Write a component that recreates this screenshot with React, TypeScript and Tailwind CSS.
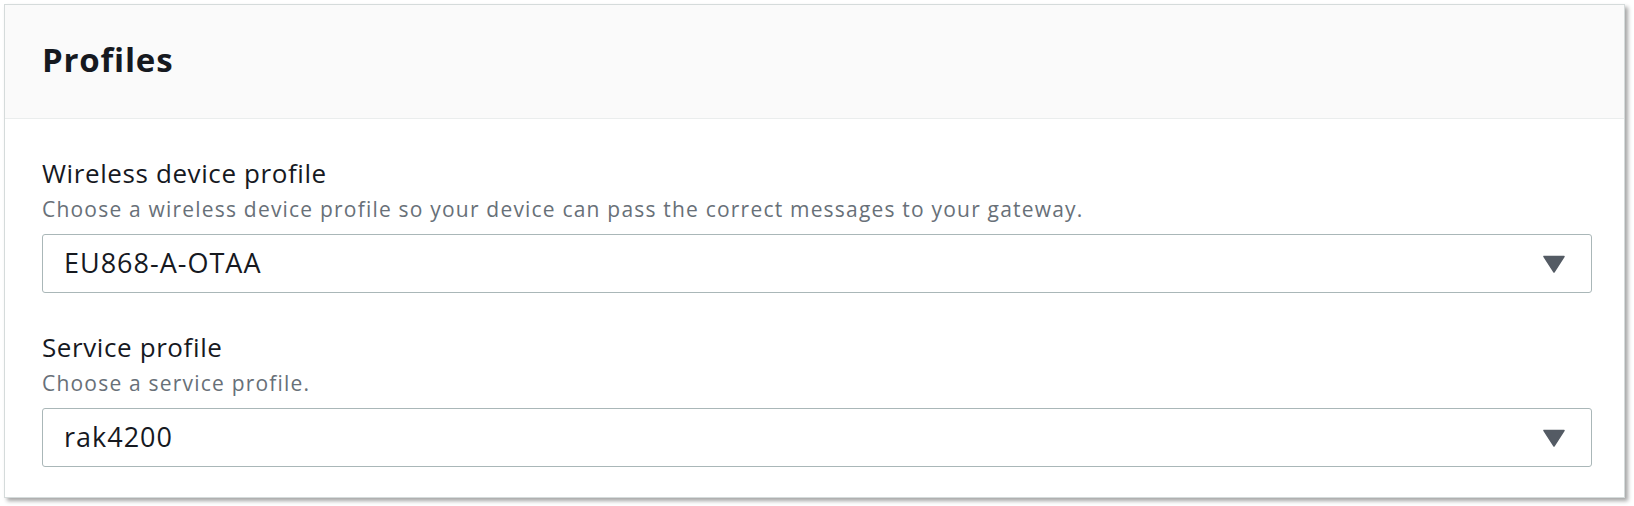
const Caret = () => (
  <svg width="22" height="18" viewBox="0 0 22 18" className="shrink-0">
    <path d="M1 1.5 H21 L11 17 Z" fill="#545b64" stroke="#545b64" strokeWidth="1.5" strokeLinejoin="round" />
  </svg>
);

type FieldProps = {
  label: string;
  description: string;
  value: string;
  first?: boolean;
};

const Field = ({ label, description, value, first }: FieldProps) => (
  <div className={first ? "" : "mt-[39px]"}>
    <div className="text-[26px] leading-[30px] tracking-[0.6px] text-[#16191f]">{label}</div>
    <div className="mt-[8px] text-[21px] leading-[26px] tracking-[1.2px] text-[#687078]">
      {description}
    </div>
    <div className="mt-[12px] flex items-center justify-between h-[59px] border border-[#aab7b8] rounded-[3px] pl-[21px] pr-[26px] bg-white">
      <span className="text-[27px] tracking-[1px] text-[#16191f]">{value}</span>
      <Caret />
    </div>
  </div>
);

const App = () => {
  return (
    <div
      className="w-[1634px] h-[506px] bg-white pt-[4px] pl-[4px]"
      style={{ fontFamily: '"Open Sans", "Noto Sans", sans-serif' }}
    >
      <div className="w-[1621px] h-[494px] border border-[#d5dbdb] bg-white shadow-[3px_3px_4px_rgba(0,0,0,0.35)]">
        <div className="h-[114px] bg-[#fafafa] border-b border-[#eaeded] flex items-center pl-[37px] pb-[4px]">
          <h2 className="text-[33px] font-bold text-[#16191f] tracking-[0.8px]">Profiles</h2>
        </div>
        <div className="pl-[37px] pr-[32px] pt-[39px]">
          <Field
            first
            label="Wireless device profile"
            description="Choose a wireless device profile so your device can pass the correct messages to your gateway."
            value="EU868-A-OTAA"
          />
          <Field
            label="Service profile"
            description="Choose a service profile."
            value="rak4200"
          />
        </div>
      </div>
    </div>
  );
};

export default App;
